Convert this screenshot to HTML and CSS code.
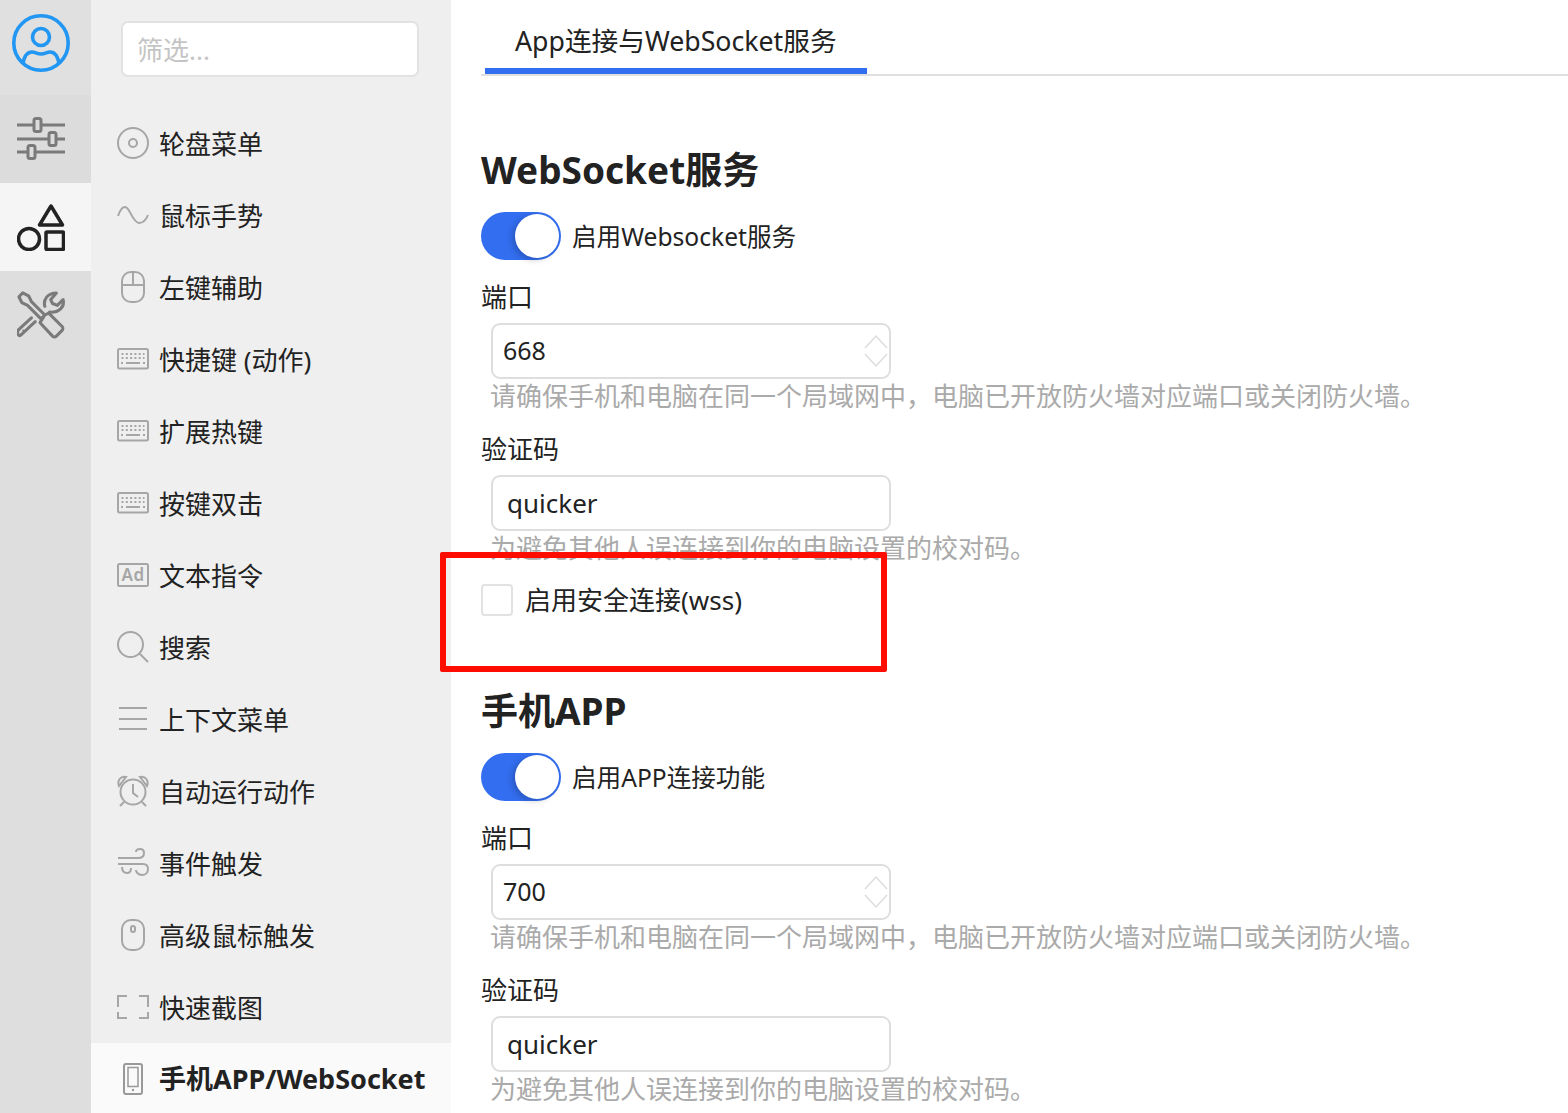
FILE: index.html
```html
<!DOCTYPE html>
<html lang="zh-CN">
<head>
<meta charset="utf-8">
<title>App连接与WebSocket服务</title>
<link rel="stylesheet" href="styles.css">
</head>
<body>
<svg class="defs" width="0" height="0" aria-hidden="true">
  <symbol id="kbd" viewBox="0 0 32 32">
    <rect x="1" y="6" width="30" height="19.500" rx="1.500" fill="none" stroke="#a6a6a6" stroke-width="2"/>
    <path d="M4.500 11h23M4.500 15h23" fill="none" stroke="#a6a6a6" stroke-width="2" stroke-dasharray="2 2.300"/>
    <path d="M4 20h2M9 20h14M26 20h2" fill="none" stroke="#a6a6a6" stroke-width="2"/>
  </symbol>
</svg>
<div class="app">
  <aside class="rail">
    <div class="rail-item rail-user">
      <svg width="60" height="60" viewBox="0 0 60 60" fill="none" stroke="#2196f3" stroke-width="3.600"><circle cx="30" cy="30" r="27.200"/><circle cx="30" cy="24" r="8.500"/><path d="M12 51c1-7 4-12 9-12 3 0 5 2 9 2s6-2 9-2c5 0 8 5 9 12"/></svg>
    </div>
    <div class="rail-item rail-tools">
      <svg width="48" height="44" viewBox="0 0 48 44" fill="none" stroke="#7a7a7a" stroke-width="3"><path d="M0 8h17M24 8h24M0 22h32M39 22h9M0 35h11M18 35h30"/><rect x="17" y="1.500" width="7" height="13" rx="2"/><rect x="32" y="15.500" width="7" height="13" rx="2"/><rect x="11" y="28.500" width="7" height="13" rx="2"/></svg>
    </div>
    <div class="rail-item rail-active">
      <svg width="48" height="48" viewBox="0 0 48 48" fill="none" stroke="#222" stroke-width="3.500" stroke-linejoin="round"><path d="M34 3 45.500 22h-23z"/><circle cx="12" cy="36" r="10.500"/><rect x="29" y="29" width="17.500" height="17.500" rx="1"/></svg>
    </div>
    <div class="rail-item rail-wrench">
      <svg width="48" height="48" viewBox="0 0 50 50" fill="none" stroke="#7a7a7a" stroke-width="3.200" stroke-linejoin="round" stroke-linecap="round"><path d="M2 6l4-4 6 3 3 6 14 14-4 4-14-14-6-3zM29 25l4-2 14 14c1 1 1 3 0 4l-6 6c-1 1-3 1-4 0L24 33z"/><path d="M19 32 5 45c-2 2-3 2-4 0s-1-3 1-5l13-12M29 16c-2-7 3-14 12-14l-6 7 2 4 5 2 6-6c2 8-5 14-14 13"/><circle cx="6.500" cy="41" r="1" fill="#7a7a7a" stroke="none"/></svg>
    </div>
  </aside>

  <nav class="side">
    <div class="filter"><input class="filter-input" type="text" placeholder="筛选..."></div>
    <ul class="nav">
      <li class="nav-item"><svg class="ni" viewBox="0 0 32 32" fill="none" stroke="#a6a6a6" stroke-width="2"><circle cx="16" cy="16" r="15"/><circle cx="16" cy="16" r="4"/></svg><span>轮盘菜单</span></li>
      <li class="nav-item"><svg class="ni" viewBox="0 0 32 32" fill="none" stroke="#a6a6a6" stroke-width="2"><path d="M1 17C3 11 5 8 8 8c5 0 7 15 14 16 4 0 7-3 9-8"/></svg><span>鼠标手势</span></li>
      <li class="nav-item"><svg class="ni" viewBox="0 0 32 32" fill="none" stroke="#a6a6a6" stroke-width="2"><rect x="5" y="1" width="22" height="30" rx="9"/><path d="M5 14h22M16 1v13"/></svg><span>左键辅助</span></li>
      <li class="nav-item"><svg class="ni"><use href="#kbd"/></svg><span>快捷键 (动作)</span></li>
      <li class="nav-item"><svg class="ni"><use href="#kbd"/></svg><span>扩展热键</span></li>
      <li class="nav-item"><svg class="ni"><use href="#kbd"/></svg><span>按键双击</span></li>
      <li class="nav-item"><svg class="ni" viewBox="0 0 32 32" fill="none" stroke="#a6a6a6" stroke-width="2"><rect x="1" y="5" width="30" height="22" rx="1.500"/><text class="ad" x="16" y="22" text-anchor="middle" stroke="none">Ad</text></svg><span>文本指令</span></li>
      <li class="nav-item"><svg class="ni" viewBox="0 0 32 32" fill="none" stroke="#a6a6a6" stroke-width="2"><circle cx="13.500" cy="13.500" r="12.500"/><path d="M22.500 22.500 31 31"/></svg><span>搜索</span></li>
      <li class="nav-item"><svg class="ni" viewBox="0 0 32 32" fill="none" stroke="#a6a6a6" stroke-width="2"><path d="M2 5h28M2 16h28M2 26h28"/></svg><span>上下文菜单</span></li>
      <li class="nav-item"><svg class="ni" viewBox="0 0 32 32" fill="none" stroke="#a6a6a6" stroke-width="2"><circle cx="16" cy="17" r="12.500"/><path d="M16 9v9l5 4M2 11C0 6 3 1 9 2zM30 11c2-5-1-10-7-9zM7 27l-4 4M25 27l4 4"/></svg><span>自动运行动作</span></li>
      <li class="nav-item"><svg class="ni" viewBox="0 0 32 32" fill="none" stroke="#a6a6a6" stroke-width="2"><path d="M1 11h20c4 0 6-2 6-5s-2-4-4-4-4 1-4 3M1 17h25c3 0 5 2 5 5s-2 6-6 6-6-3-6-5M5 20c0 4 2 6 5 6s4-2 4-5"/></svg><span>事件触发</span></li>
      <li class="nav-item"><svg class="ni" viewBox="0 0 32 32" fill="none" stroke="#a6a6a6" stroke-width="2"><rect x="5" y="1" width="22" height="30" rx="9"/><rect x="14" y="7" width="4" height="6" rx="2"/></svg><span>高级鼠标触发</span></li>
      <li class="nav-item"><svg class="ni" viewBox="0 0 32 32" fill="none" stroke="#a6a6a6" stroke-width="2"><path d="M1 16V5h9M22 5h9v11M1 21v6h9M22 27h9v-6"/></svg><span>快速截图</span></li>
      <li class="nav-item nav-active"><svg class="ni" viewBox="0 0 32 32" fill="none" stroke="#999" stroke-width="2"><rect x="7" y="1" width="18" height="30" rx="2"/><path d="M11 4.500h10v19H11z" stroke-width="1.500"/><circle cx="16" cy="27" r="1.200" fill="#999" stroke="none"/></svg><span class="nav-active-text">手机APP/WebSocket</span></li>
    </ul>
  </nav>

  <main class="main">
    <div class="tabs"><div class="tab">App连接与WebSocket服务</div></div>

    <section class="group">
      <h2 class="title">WebSocket服务</h2>
      <label class="switch-row"><span class="switch"><span class="knob"></span></span><span class="switch-text">启用Websocket服务</span></label>
      <div class="label">端口</div>
      <div class="field"><input class="input input-num" type="text" value="668"><svg class="spin" viewBox="0 0 24 34" fill="none" stroke="#dcdcdc" stroke-width="1.500"><path d="M1 14 12 2l11 12M1 20l11 12 11-12"/></svg></div>
      <div class="hint">请确保手机和电脑在同一个局域网中，电脑已开放防火墙对应端口或关闭防火墙。</div>
      <div class="label">验证码</div>
      <div class="field"><input class="input" type="text" value="quicker"></div>
      <div class="hint">为避免其他人误连接到你的电脑设置的校对码。</div>
      <label class="check-row"><span class="check"></span><span>启用安全连接(wss)</span></label>
    </section>

    <section class="group group-app">
      <h2 class="title">手机APP</h2>
      <label class="switch-row"><span class="switch"><span class="knob"></span></span><span class="switch-text">启用APP连接功能</span></label>
      <div class="label">端口</div>
      <div class="field"><input class="input input-num" type="text" value="700"><svg class="spin" viewBox="0 0 24 34" fill="none" stroke="#dcdcdc" stroke-width="1.500"><path d="M1 14 12 2l11 12M1 20l11 12 11-12"/></svg></div>
      <div class="hint">请确保手机和电脑在同一个局域网中，电脑已开放防火墙对应端口或关闭防火墙。</div>
      <div class="label">验证码</div>
      <div class="field"><input class="input" type="text" value="quicker"></div>
      <div class="hint">为避免其他人误连接到你的电脑设置的校对码。</div>
    </section>

    <div class="highlight"></div>
  </main>
</div>
</body>
</html>
```

FILE: styles.css
```css
* { box-sizing: border-box; }
html, body { margin: 0; height: 100%; overflow: hidden; }
body {
  font-family: "Noto Sans", "Noto Sans CJK SC", sans-serif;
  font-size: 26px;
  color: #222;
  background: #fff;
}
.defs { position: absolute; }
.app { display: flex; height: 1113px; overflow: hidden; }

.rail { width: 91px; flex: none; background: #dedede; display: flex; flex-direction: column; }
.rail-item { display: flex; align-items: center; justify-content: center; height: 88px; padding-right: 9px; }
.rail-user { height: 95px; padding-bottom: 9px; background: #e0e0e0; }
.rail-tools { background: #dcdcdc; }
.rail-active { background: #f5f5f5; }

.side { width: 360px; flex: none; background: #efefef; display: flex; flex-direction: column; }
.filter { flex: none; padding: 21px 0 0 30px; height: 107px; }
.filter-input {
  display: block; width: 298px; height: 56px; padding: 2px 14px 0;
  border: 2px solid #e2e2e2; border-radius: 7px; background: #fff;
  font: inherit; color: #222; outline: none;
}
.filter-input::placeholder { color: #c4c4c4; opacity: 1; }
.nav { list-style: none; margin: 0; padding: 0; }
.nav-item { display: flex; align-items: center; height: 72px; padding-left: 26px; gap: 10px; }
.ni { width: 32px; height: 32px; flex: none; }
.ad { font-size: 17px; font-weight: 600; letter-spacing: .5px; fill: #a6a6a6; }
.nav-active { background: #fafafa; font-weight: 700; font-size: 27px; }
.nav-active-text { padding-bottom: 4px; }

.main { position: relative; flex: 1; min-width: 0; padding-left: 30px; }
.tabs { height: 76px; border-bottom: 2px solid #e0e0e0; padding-left: 4px; }
.tab {
  width: 382px; height: 74px; padding: 20px 0 0 30px;
  font-size: 26.700px; line-height: 42px; border-bottom: 6px solid #336ef0; white-space: nowrap;
}
.group { padding-top: 69px; }
.group-app { padding-top: 70px; }
.title { margin: 0; height: 50px; font-size: 37px; line-height: 50px; font-weight: 700; }
.switch-row { display: flex; align-items: center; gap: 11px; height: 48px; margin-top: 17px; font-size: 24.600px; }
.switch-text { padding-bottom: 2px; }
.switch { width: 80px; height: 48px; flex: none; border-radius: 24px; background: #336ef0; padding: 2px; display: flex; justify-content: flex-end; }
.knob { width: 44px; height: 44px; border-radius: 50%; background: #fff; box-shadow: -3px 2px 6px rgba(0,0,0,.2); }
.label { height: 36px; line-height: 36px; margin-top: 19px; }
.hint + .label { margin-top: 18px; }
.field { position: relative; width: 400px; height: 56px; margin: 8px 0 0 10px; }
.input {
  display: block; width: 100%; height: 100%; padding: 0 14px;
  border: 2px solid #dedede; border-radius: 9px; background: #fff;
  font: inherit; color: #222; outline: none;
}
.input-num { padding: 0 10px 2px; font-size: 25px; }
.spin { position: absolute; right: 3px; top: 11px; width: 24px; height: 34px; }
.hint { height: 34px; line-height: 34px; margin-left: 9px; color: #aaa; white-space: nowrap; }
.check-row { display: flex; align-items: center; gap: 12px; height: 32px; margin-top: 19px; line-height: 30px; }
.check { width: 32px; height: 32px; flex: none; border: 2px solid #e2e2e2; border-radius: 4px; background: #fff; }
.highlight {
  position: absolute; left: -11px; top: 552px; width: 447px; height: 120px;
  border: 6px solid #ff0d00; border-radius: 2px;
}
```
